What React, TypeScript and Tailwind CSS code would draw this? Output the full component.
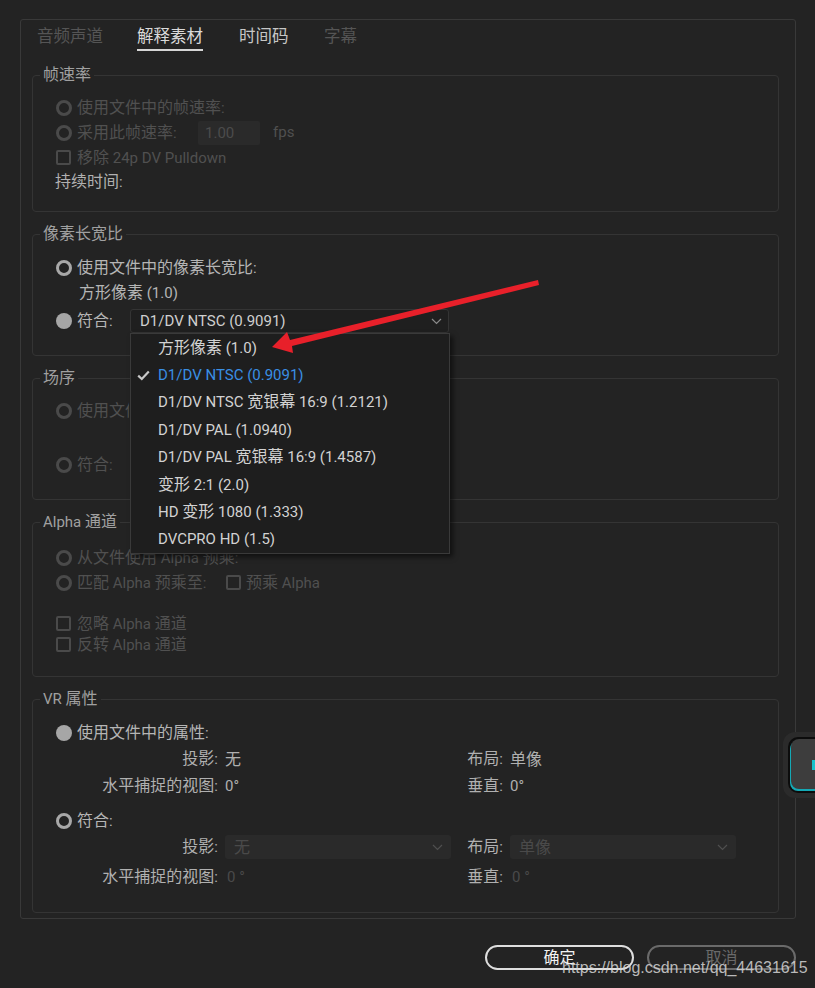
import React from 'react';

// ascii runs are set a size smaller so Latin stays narrow next to CJK
const Tx: React.FC<{ s: string }> = ({ s }) => (
  <span>
    {s.split(/([\x20-\x7e°]+)/).map((part, i) =>
      /^[\x20-\x7e°]+$/.test(part) ? (
        <span key={i} className="text-[15px]">
          {part}
        </span>
      ) : (
        <React.Fragment key={i}>{part}</React.Fragment>
      )
    )}
  </span>
);

type RadioKind = 'dim' | 'off' | 'on';

const Radio: React.FC<{ kind: RadioKind }> = ({ kind }) => {
  if (kind === 'on') return <span className="w-[16px] h-[16px] rounded-full bg-[#a6a6a6] shrink-0" />;
  return (
    <span
      className={
        kind === 'dim'
          ? 'w-[16px] h-[16px] rounded-full border-[3px] border-[#4a4a4a] shrink-0'
          : 'w-[16px] h-[16px] rounded-full border-[3px] border-[#a8a8a8] shrink-0'
      }
    />
  );
};

const Box: React.FC = () => <span className="w-[15px] h-[15px] rounded-[2px] border-2 border-[#4a4a4a] shrink-0" />;

const Chevron: React.FC<{ color: string }> = ({ color }) => (
  <svg width="11" height="7" viewBox="0 0 11 7" className="shrink-0">
    <path d="M1 1 L5.5 5.5 L10 1" fill="none" stroke={color} strokeWidth="1.2" />
  </svg>
);

const Group: React.FC<{ title: string; h: string; pt: string; children: React.ReactNode }> = ({ title, h, pt, children }) => (
  <div className={`relative rounded-[4px] border border-[#343434] pl-[23px] ${h} ${pt}`}>
    <span className="absolute left-[7px] top-[-13px] px-[3px] bg-[#232323] leading-[24px] text-[#a0a0a0]">
      <Tx s={title} />
    </span>
    {children}
  </div>
);

const MENU = [
  '方形像素 (1.0)',
  'D1/DV NTSC (0.9091)',
  'D1/DV NTSC 宽银幕 16:9 (1.2121)',
  'D1/DV PAL (1.0940)',
  'D1/DV PAL 宽银幕 16:9 (1.4587)',
  '变形 2:1 (2.0)',
  'HD 变形 1080 (1.333)',
  'DVCPRO HD (1.5)',
];

const App: React.FC = () => {
  return (
    <div className="relative w-[815px] h-[988px] overflow-hidden bg-[#232323] font-[Roboto,'Noto_Sans_CJK_SC',sans-serif] text-[16px] leading-[25px] text-[#b3b3b3]">
      <div className="ml-[20px] mt-[19px] w-[776px] h-[900px] rounded-[3px] border border-[#393939]">
        {/* tabs */}
        <div className="h-[36px] pl-[16px] pt-[7px] flex items-start leading-[20px] text-[16.5px]">
          <span className="w-[100px] text-[#555555]">音频声道</span>
          <span className="w-[102px]">
            <span className="inline-block text-[#dadada] border-b-2 border-[#d6d6d6] pb-[2px]">解释素材</span>
          </span>
          <span className="w-[85px] text-[#c6c6c6]">时间码</span>
          <span className="text-[#555555]">字幕</span>
        </div>

        <div className="ml-[11px] mt-[19px] w-[747px] flex flex-col gap-[22px]">
          <Group title="帧速率" h="h-[137px]" pt="pt-[19px]">
            <div className="h-[25px] flex items-center gap-[5px] text-[#505050]">
              <Radio kind="dim" />
              <Tx s="使用文件中的帧速率:" />
            </div>
            <div className="h-[25px] flex items-center text-[#505050]">
              <Radio kind="dim" />
              <span className="ml-[5px] w-[121px]">
                <Tx s="采用此帧速率:" />
              </span>
              <span className="w-[62px] h-[24px] rounded-[2px] bg-[#2a2a2a] pl-[7px] leading-[24px] text-[15px] text-[#4c4c4c]">1.00</span>
              <span className="ml-[13px] text-[15px]">fps</span>
            </div>
            <div className="h-[25px] flex items-center gap-[6px] text-[#505050]">
              <Box />
              <Tx s="移除 24p DV Pulldown" />
            </div>
            <div className="h-[23px] flex items-center -ml-[1px] text-[#b0b0b0]">
              <Tx s="持续时间:" />
            </div>
          </Group>

          <Group title="像素长宽比" h="h-[122px]" pt="pt-[20px]">
            <div className="h-[25px] flex items-center gap-[5px] text-[#b5b5b5]">
              <Radio kind="off" />
              <Tx s="使用文件中的像素长宽比:" />
            </div>
            <div className="h-[25px] flex items-center pl-[23px] text-[#b5b5b5]">
              <Tx s="方形像素 (1.0)" />
            </div>
            <div className="mt-[4px] h-[24px] flex items-center text-[#b5b5b5]">
              <Radio kind="on" />
              <span className="ml-[5px] w-[53px]">
                <Tx s="符合:" />
              </span>
              <div className="w-[319px] h-[24px] rounded-[3px] border border-[#343434] bg-[#1f1f1f] pl-[9px] pr-[6px] flex items-center justify-between text-[#cfcfcf]">
                <Tx s="D1/DV NTSC (0.9091)" />
                <Chevron color="#8a8a8a" />
              </div>
            </div>
          </Group>

          <Group title="场序" h="h-[122px]" pt="pt-[19px]">
            <div className="h-[25px] flex items-center gap-[5px] text-[#505050]">
              <Radio kind="dim" />
              {/* the open menu covers the rest of this line */}
              <span className="w-[52px] overflow-hidden whitespace-nowrap">
                <Tx s="使用文件中的场序:" />
              </span>
            </div>
            <div className="mt-[29px] h-[25px] flex items-center gap-[5px] text-[#505050]">
              <Radio kind="dim" />
              <Tx s="符合:" />
            </div>
          </Group>

          <Group title="Alpha 通道" h="h-[155px]" pt="pt-[22px]">
            <div className="h-[25px] flex items-center gap-[5px] text-[#505050]">
              <Radio kind="dim" />
              <Tx s="从文件使用 Alpha 预乘:" />
            </div>
            <div className="h-[25px] flex items-center text-[#505050]">
              <Radio kind="dim" />
              <span className="ml-[5px] w-[149px]">
                <Tx s="匹配 Alpha 预乘至:" />
              </span>
              <Box />
              <span className="ml-[5px]">
                <Tx s="预乘 Alpha" />
              </span>
            </div>
            <div className="mt-[18px] h-[21px] flex items-center gap-[6px] text-[#505050]">
              <Box />
              <Tx s="忽略 Alpha 通道" />
            </div>
            <div className="h-[21px] flex items-center gap-[6px] text-[#505050]">
              <Box />
              <Tx s="反转 Alpha 通道" />
            </div>
          </Group>

          <Group title="VR 属性" h="h-[214px]" pt="pt-[20px]">
            <div className="h-[26px] flex items-center gap-[5px] text-[#b5b5b5]">
              <Radio kind="on" />
              <Tx s="使用文件中的属性:" />
            </div>
            <div className="h-[26px] flex items-center text-[#b0b0b0]">
              <span className="w-[162px] text-right">
                <Tx s="投影:" />
              </span>
              <span className="ml-[7px] w-[226px]">无</span>
              <span className="w-[52px] text-right">
                <Tx s="布局:" />
              </span>
              <span className="ml-[7px]">单像</span>
            </div>
            <div className="h-[28px] flex items-center text-[#b0b0b0]">
              <span className="w-[162px] text-right">
                <Tx s="水平捕捉的视图:" />
              </span>
              <span className="ml-[7px] w-[226px]">
                <Tx s="0°" />
              </span>
              <span className="w-[52px] text-right">
                <Tx s="垂直:" />
              </span>
              <span className="ml-[7px]">
                <Tx s="0°" />
              </span>
            </div>
            <div className="mt-[8px] h-[26px] flex items-center gap-[5px] text-[#b5b5b5]">
              <Radio kind="off" />
              <Tx s="符合:" />
            </div>
            <div className="h-[26px] flex items-center text-[#b0b0b0]">
              <span className="w-[162px] text-right">
                <Tx s="投影:" />
              </span>
              <div className="ml-[7px] w-[226px] h-[24px] rounded-[3px] bg-[#2a2a2a] pl-[9px] pr-[8px] flex items-center justify-between text-[#4a4a4a]">
                <span>无</span>
                <Chevron color="#4f4f4f" />
              </div>
              <span className="w-[52px] text-right">
                <Tx s="布局:" />
              </span>
              <div className="ml-[7px] w-[226px] h-[24px] rounded-[3px] bg-[#2a2a2a] pl-[9px] pr-[8px] flex items-center justify-between text-[#4a4a4a]">
                <span>单像</span>
                <Chevron color="#4f4f4f" />
              </div>
            </div>
            <div className="mt-[4px] h-[26px] flex items-center text-[#b0b0b0]">
              <span className="w-[162px] text-right">
                <Tx s="水平捕捉的视图:" />
              </span>
              <span className="ml-[9px] w-[224px] text-[#4a4a4a]">
                <Tx s="0 °" />
              </span>
              <span className="w-[52px] text-right">
                <Tx s="垂直:" />
              </span>
              <span className="ml-[9px] text-[#4a4a4a]">
                <Tx s="0 °" />
              </span>
            </div>
          </Group>
        </div>
      </div>

      {/* buttons */}
      <div className="mt-[26px] ml-[485px] flex gap-[13px]">
        <button className="w-[149px] h-[25px] rounded-full border-2 border-[#dedede] text-[#f2f2f2] leading-[21px]">确定</button>
        <button className="w-[149px] h-[25px] rounded-full border-2 border-[#6a6a6a] text-[#6a6a6a] leading-[21px]">取消</button>
      </div>

      {/* open dropdown */}
      <div className="absolute left-[130px] top-[333px] w-[320px] h-[221px] border border-[#3a3a3a] bg-[#1e1e1e] shadow-[3px_3px_5px_rgba(0,0,0,0.55)]">
        {MENU.map((item, i) => (
          <div key={item} className="relative h-[27.4px] flex items-center pl-[27px] text-[#d2d2d2]">
            {i === 1 && (
              <svg width="13" height="11" viewBox="0 0 13 11" className="absolute left-[6px] top-[9px]">
                <path d="M1.2 5.6 L4.8 9 L11.8 1.5" fill="none" stroke="#c8c8c8" strokeWidth="2.2" />
              </svg>
            )}
            <span className={i === 1 ? 'text-[#3a8fe4]' : ''}>
              <Tx s={item} />
            </span>
          </div>
        ))}
      </div>

      {/* red annotation arrow */}
      <svg width="815" height="988" viewBox="0 0 815 988" className="absolute left-0 top-0 pointer-events-none">
        <polygon points="272,347 287,332 290,340 538,280 539,285 292,346 293,353" fill="#e8202a" />
      </svg>

      {/* dock widget peeking in at the right edge */}
      <div className="absolute left-[783px] top-[732px] w-[44px] h-[66px] rounded-[12px] bg-[#2b2b2b]">
        <div className="absolute left-[5px] top-[5px] w-[40px] h-[56px] rounded-[10px] bg-[#0c0c0c]">
          <div className="absolute left-[3px] top-[2px] w-[36px] h-[50px] rounded-[8px] bg-[#3d3d3d] shadow-[-1px_2px_0_#14a9b5]" />
          <div className="absolute left-[24px] top-[23px] w-[4px] h-[10px] bg-[#18c2cc]" />
        </div>
      </div>

      {/* watermark */}
      <span className="absolute left-[562px] top-[960px] font-['Liberation_Sans',Arial,sans-serif] text-[16px] leading-[16px] text-[#d6d6d6]/85">
        https://blog.csdn.net/qq_44631615
      </span>
    </div>
  );
};

export default App;
